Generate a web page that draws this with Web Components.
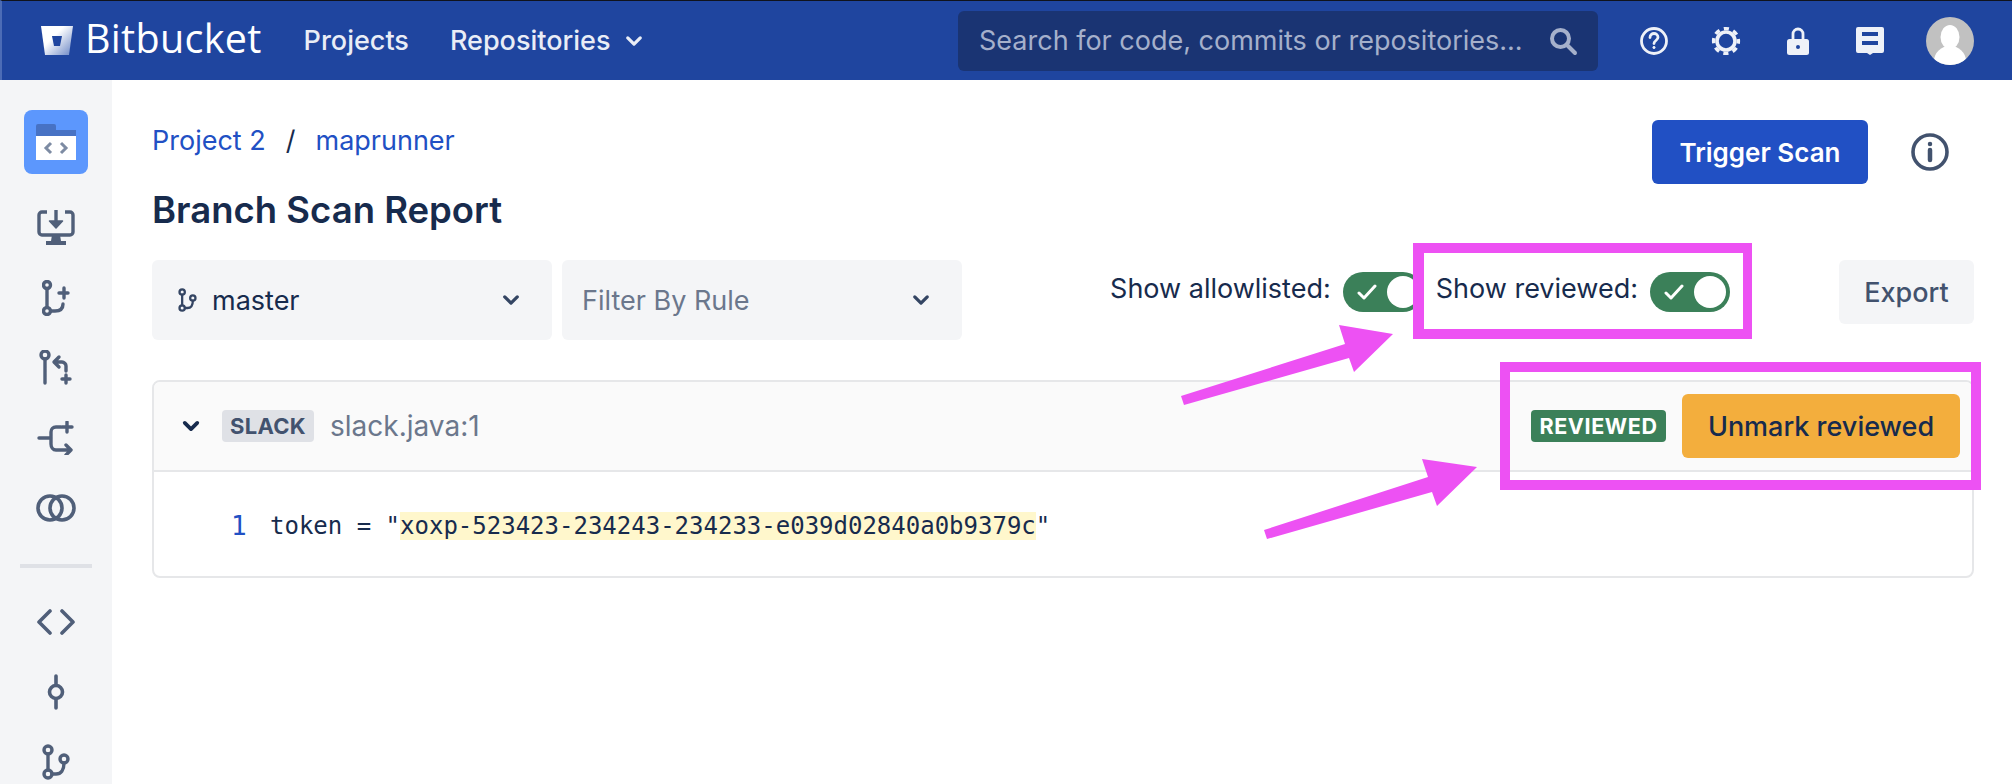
<!DOCTYPE html>
<html lang="en">
<head>
<meta charset="utf-8">
<title>Branch Scan Report</title>
<style>
  html, body { margin: 0; height: 100%; }
  body { position: relative; overflow: hidden; background: #fff; font-family: Inter, "Liberation Sans", sans-serif; color: #172b4d; }
</style>
</head>
<body>
<bb-app></bb-app>
<scan-annotations></scan-annotations>

<script>
const chevron = (size, color, width) => `<svg width="${size}" height="${size}" viewBox="0 0 16 16" fill="none" stroke="${color}" stroke-width="${width}" stroke-linecap="round" stroke-linejoin="round"><path d="M3 5.5l5 5 5-5"/></svg>`;

const branchIcon = (w, h, color) => `<svg width="${w}" height="${h}" viewBox="0 0 28 36" fill="none" stroke="${color}" stroke-width="3.4" stroke-linecap="round"><circle cx="6" cy="6" r="4"/><circle cx="6" cy="30" r="4"/><circle cx="22" cy="15" r="4"/><path d="M6 10v16M10 30h4c5 0 8-4 8-11"/></svg>`;

class BbHeader extends HTMLElement {
  constructor() {
    super();
    this.attachShadow({ mode: 'open' });
  }
  connectedCallback() {
    this.shadowRoot.innerHTML = `
      <style>
        :host { display: flex; align-items: center; box-sizing: border-box; height: 80px; padding: 0 38px 0 39px; background: #1f459f; border-top: 1px solid #10131c; border-left: 2px solid #4c6cb6; color: #fff; }
        .logo { display: flex; align-items: center; gap: 12px; }
        .word { font: 400 39.5px "Open Sans", sans-serif; letter-spacing: 0.3px; line-height: 1; position: relative; top: -2px; }
        nav { display: flex; align-items: center; gap: 41px; margin-left: 42px; flex: 1; font-size: 27px; font-weight: 500; color: #e9edf6; }
        .repos { display: flex; align-items: center; gap: 14px; }
        svg { display: block; }
        .search { display: flex; align-items: center; justify-content: space-between; box-sizing: border-box; width: 640px; height: 60px; padding: 0 20px 0 21px; background: #1a3473; border-radius: 6px; color: #a5b0cb; font-size: 27px; white-space: nowrap; }
        .icons { display: flex; align-items: center; gap: 32px; margin-left: 36px; }
        .icons svg { width: 40px; height: 40px; }
        .icons .avatar { margin-left: 4px; width: 48px; height: 48px; }
      </style>
      <div class="logo">
        <svg width="32" height="30" viewBox="0 0 32 30">
          <defs><linearGradient id="bk" x1="0.45" y1="0.3" x2="1" y2="0.8"><stop offset="0" stop-color="#fff"/><stop offset="1" stop-color="#7f97cd"/></linearGradient></defs>
          <path d="M0 0H32L28 29H4Z" fill="url(#bk)"/><path d="M11 10H21L19 20H13Z" fill="#1f459f"/>
        </svg>
        <span class="word">Bitbucket</span>
      </div>
      <nav>
        <span>Projects</span>
        <span class="repos">Repositories ${chevron(20, '#e9edf6', 2.6)}</span>
      </nav>
      <div class="search">
        <span>Search for code, commits or repositories...</span>
        <svg width="30" height="30" viewBox="0 0 30 30" fill="none" stroke="#a5b0cb" stroke-width="4" stroke-linecap="round"><circle cx="12.5" cy="12.5" r="8.5"/><path d="M19 19l8 8"/></svg>
      </div>
      <div class="icons">
        <svg viewBox="0 0 40 40" fill="none" stroke="#eef1f8" stroke-width="2.8"><circle cx="20" cy="20" r="12.5"/><path d="M16 16.5c0-2.5 2-4 4-4s4 1.5 4 3.8c0 3.2-4 3.2-4 6.2" stroke-linecap="round"/><circle cx="20" cy="26.5" r="1.1" fill="#eef1f8" stroke-width="1"/></svg>
        <svg viewBox="0 0 40 40" fill="none" stroke="#eef1f8"><circle cx="20" cy="20" r="9" stroke-width="3.6"/><circle cx="20" cy="20" r="12.4" stroke-width="3.4" stroke-dasharray="5.2 4.54" stroke-dashoffset="2.6"/></svg>
        <svg viewBox="0 0 40 40" fill="none"><path d="M15 19v-6a5 5 0 0110 0v6" stroke="#eef1f8" stroke-width="2.8"/><rect x="9" y="18" width="22" height="16" rx="2.500" fill="#eef1f8"/><circle cx="20" cy="26" r="2" fill="#1f459f"/></svg>
        <svg viewBox="0 0 40 40" fill="none"><path d="M6 8a2 2 0 012-2h24a2 2 0 012 2v22a2 2 0 01-2 2h-9l-3 2-3-2H8a2 2 0 01-2-2z" fill="#eef1f8"/><rect x="12" y="11" width="16" height="4" fill="#1f459f"/><rect x="12" y="20" width="16" height="4" fill="#1f459f"/></svg>
        <svg class="avatar" viewBox="0 0 48 48"><defs><clipPath id="av"><circle cx="24" cy="24" r="24"/></clipPath></defs><circle cx="24" cy="24" r="24" fill="#c1c1c1"/><g clip-path="url(#av)" fill="#fff"><ellipse cx="24" cy="20" rx="9.500" ry="12"/><ellipse cx="24" cy="44" rx="16" ry="15"/></g></svg>
      </div>
    `;
  }
}

class SideIcon extends HTMLElement {
  constructor() {
    super();
    this.attachShadow({ mode: 'open' });
  }
  connectedCallback() {
    this.shadowRoot.innerHTML = `
      <style>
        :host { display: flex; align-items: center; justify-content: center; width: 64px; height: 70px; }
        :host([active]) { height: 64px; background: #5c97fd; border-radius: 8px; }
      </style>
      <slot></slot>
    `;
  }
}

class BbSidebar extends HTMLElement {
  constructor() {
    super();
    this.attachShadow({ mode: 'open' });
  }
  connectedCallback() {
    const c = '#505f79';
    this.shadowRoot.innerHTML = `
      <style>
        :host { display: flex; flex-direction: column; align-items: center; box-sizing: border-box; flex: none; width: 112px; padding-top: 30px; background: #f4f5f7; overflow: hidden; }
        side-icon { flex: none; }
        svg { display: block; }
        .tile { margin-bottom: 19px; }
        hr { flex: none; width: 72px; height: 4px; margin: 21px 0 19px; border: 0; background: #dfe1e6; }
      </style>
      <side-icon active class="tile">
        <svg width="40" height="36" viewBox="0 0 40 36"><path d="M0 2a2 2 0 012-2h16a2 2 0 012 2v4h20v7H0z" fill="#4772c4"/><rect y="12" width="40" height="24" fill="#fff"/><path d="M15 19l-5 5 5 5M25 19l5 5-5 5" fill="none" stroke="#7d8ba3" stroke-width="3"/></svg>
      </side-icon>
      <side-icon>
        <svg width="38" height="38" viewBox="0 0 38 38" fill="none"><path d="M10 3H5a3 3 0 00-3 3v17a3 3 0 003 3h28a3 3 0 003-3V6a3 3 0 00-3-3h-5" stroke="${c}" stroke-width="3.4"/><path d="M19 1v14" stroke="${c}" stroke-width="3.4"/><path d="M12.500 12h13L19 19z" fill="${c}" stroke="${c}" stroke-width="1.500" stroke-linejoin="round"/><path d="M15 26h8l1 6h5v4H9v-4h5z" fill="${c}"/></svg>
      </side-icon>
      <side-icon>
        <svg width="28" height="36" viewBox="0 0 28 36" fill="none" stroke="${c}" stroke-width="3.400" stroke-linecap="round"><circle cx="5" cy="5" r="3.500"/><circle cx="5" cy="31" r="3.500"/><path d="M5 9v18M9 31h4c6 0 8-3 8-7M22 8v10M17 13h9"/></svg>
      </side-icon>
      <side-icon>
        <svg width="34" height="36" viewBox="0 0 34 36" fill="none" stroke="${c}" stroke-width="3.400" stroke-linecap="round" stroke-linejoin="round"><circle cx="6" cy="5" r="4"/><path d="M6 9v24M20 7l-5 5 5 5M16 12h7c2 0 4 2 4 4v5M27 25v8M23 29h8"/></svg>
      </side-icon>
      <side-icon>
        <svg width="38" height="34" viewBox="0 0 38 34" fill="none" stroke="${c}" stroke-width="3.400" stroke-linecap="round" stroke-linejoin="round"><path d="M2 17h12M24 6h-5c-3 0-5 2-5 5v12c0 3 2 6 5 6h15M29 24l5 5-5 5M30 1v10M25 6h10"/></svg>
      </side-icon>
      <side-icon>
        <svg width="40" height="30" viewBox="0 0 40 30" fill="none" stroke="${c}" stroke-width="3.600"><circle cx="14" cy="15" r="12"/><circle cx="26" cy="15" r="12"/></svg>
      </side-icon>
      <hr>
      <side-icon>
        <svg width="38" height="26" viewBox="0 0 38 26" fill="none" stroke="${c}" stroke-width="3.600" stroke-linecap="round" stroke-linejoin="round"><path d="M13 2L2 13l11 11M25 2l11 11-11 11"/></svg>
      </side-icon>
      <side-icon>
        <svg width="18" height="36" viewBox="0 0 18 36" fill="none" stroke="${c}" stroke-width="3.600" stroke-linecap="round"><circle cx="9" cy="18" r="6.500"/><path d="M9 2v9M9 25v9"/></svg>
      </side-icon>
      <side-icon>${branchIcon(28, 36, c)}</side-icon>
    `;
  }
}

class ScanTitle extends HTMLElement {
  constructor() {
    super();
    this.attachShadow({ mode: 'open' });
  }
  connectedCallback() {
    this.shadowRoot.innerHTML = `
      <style>
        :host { display: flex; justify-content: space-between; height: 140px; }
        .crumbs { display: flex; align-items: center; height: 40px; font-size: 27px; color: #2150c4; }
        .sep { margin: 0 20px; color: #172b4d; }
        h1 { margin: 28px 0 0; font-size: 36.5px; line-height: 44px; font-weight: 600; color: #172b4d; }
        .actions { display: flex; align-items: flex-start; gap: 43px; }
        button { width: 216px; height: 64px; border: 0; border-radius: 6px; background: #2150c4; color: #fff; font: 600 26px Inter, sans-serif; }
        svg { display: block; margin: 13px 25px 0 0; }
      </style>
      <div>
        <div class="crumbs"><span>Project 2</span><span class="sep">/</span><span>maprunner</span></div>
        <h1>Branch Scan Report</h1>
      </div>
      <div class="actions">
        <button>Trigger Scan</button>
        <svg width="38" height="38" viewBox="0 0 38 38" fill="none" stroke="#42526e" stroke-width="3.600"><circle cx="19" cy="19" r="17"/><path d="M19 17v10" stroke-width="4.500" stroke-linecap="round"/><circle cx="19" cy="11" r="1.500" fill="#42526e" stroke-width="1.500"/></svg>
      </div>
    `;
  }
}

class ScanSelect extends HTMLElement {
  constructor() {
    super();
    this.attachShadow({ mode: 'open' });
  }
  connectedCallback() {
    this.shadowRoot.innerHTML = `
      <style>
        :host { display: flex; align-items: center; box-sizing: border-box; width: 400px; height: 80px; padding: 0 31px 0 26px; background: #f4f5f7; border-radius: 6px; font-size: 27px; color: #172b4d; }
        :host([placeholder]) { padding-left: 20px; color: #6b778c; }
        .value { flex: 1; }
        slot[name=icon]::slotted(*) { margin-right: 15px; }
        svg { display: block; }
      </style>
      <slot name="icon"></slot>
      <span class="value"><slot></slot></span>
      ${chevron(20, '#344563', 2.6)}
    `;
  }
}

class ScanToggle extends HTMLElement {
  constructor() {
    super();
    this.attachShadow({ mode: 'open' });
  }
  connectedCallback() {
    this.shadowRoot.innerHTML = `
      <style>
        :host { display: flex; align-items: center; gap: 12px; font-size: 27px; color: #172b4d; }
        .label { position: relative; top: -4px; }
        .track { display: flex; align-items: center; justify-content: space-between; box-sizing: border-box; width: 80px; height: 40px; padding: 0 4px 0 14px; border-radius: 20px; background: #3b8059; }
        .knob { width: 32px; height: 32px; border-radius: 50%; background: #fff; }
        svg { display: block; }
      </style>
      <span class="label"><slot></slot></span>
      <span class="track">
        <svg width="20" height="18" viewBox="0 0 20 18" fill="none" stroke="#fff" stroke-width="3" stroke-linecap="round" stroke-linejoin="round"><path d="M2 10l5 5L18 3"/></svg>
        <span class="knob"></span>
      </span>
    `;
  }
}

class ScanToolbar extends HTMLElement {
  constructor() {
    super();
    this.attachShadow({ mode: 'open' });
  }
  connectedCallback() {
    this.shadowRoot.innerHTML = `
      <style>
        :host { display: flex; align-items: flex-start; gap: 10px; height: 80px; }
        .toggles { display: flex; gap: 13px; margin: 12px 0 0 auto; }
        button { margin-left: 99px; width: 135px; height: 64px; border: 0; border-radius: 6px; background: #f4f5f7; color: #42526e; font: 500 27px Inter, sans-serif; }
        svg { display: block; }
      </style>
      <scan-select>
        <span slot="icon">${branchIcon(19, 24, '#344563')}</span>
        master
      </scan-select>
      <scan-select placeholder>Filter By Rule</scan-select>
      <div class="toggles">
        <scan-toggle>Show allowlisted:</scan-toggle>
        <scan-toggle>Show reviewed:</scan-toggle>
      </div>
      <button>Export</button>
    `;
  }
}

class ScanFinding extends HTMLElement {
  constructor() {
    super();
    this.attachShadow({ mode: 'open' });
  }
  connectedCallback() {
    this.shadowRoot.innerHTML = `
      <style>
        :host { display: block; box-sizing: border-box; height: 198px; margin-top: 40px; border: 2px solid #e6e7e9; border-radius: 8px; overflow: hidden; }
        header { display: flex; align-items: center; box-sizing: border-box; height: 90px; padding: 0 12px 0 27px; background: #fafafa; border-bottom: 2px solid #e6e7e9; }
        .lozenge { margin-left: 21px; height: 32px; line-height: 32px; border-radius: 4px; background: #dfe1e6; color: #42526e; font-size: 22px; font-weight: 700; box-sizing: border-box; width: 92px; text-align: center; letter-spacing: 0.3px; }
        .file { margin-left: 16px; flex: 1; font-size: 28px; color: #6b778c; }
        .state { height: 32px; width: 135px; line-height: 32px; text-align: center; border-radius: 4px; background: #3b8059; color: #fff; font-size: 21.5px; font-weight: 700; letter-spacing: 0.6px; }
        button { margin-left: 16px; width: 278px; height: 64px; border: 0; border-radius: 6px; background: #f3ae3d; color: #172b4d; font: 500 27px Inter, sans-serif; }
        svg { display: block; }
        .code { display: flex; align-items: center; padding: 40px 0 0 77px; font: 24px/28px "DejaVu Sans Mono", "Liberation Mono", monospace; color: #172b4d; }
        .num { width: 39px; color: #2150c4; font-size: 26px; }
        mark { background: #fff7cc; color: inherit; }
      </style>
      <header>
        ${chevron(20, '#172b4d', 3)}
        <span class="lozenge">SLACK</span>
        <span class="file">slack.java:1</span>
        <span class="state">REVIEWED</span>
        <button>Unmark reviewed</button>
      </header>
      <div class="code"><span class="num">1</span><span>token = "<mark>xoxp-523423-234243-234233-e039d02840a0b9379c</mark>"</span></div>
    `;
  }
}

class BbApp extends HTMLElement {
  constructor() {
    super();
    this.attachShadow({ mode: 'open' });
  }
  connectedCallback() {
    this.shadowRoot.innerHTML = `
      <style>
        :host { display: flex; flex-direction: column; height: 784px; overflow: hidden; }
        .body { display: flex; flex: 1; min-height: 0; }
        main { flex: 1; box-sizing: border-box; padding: 40px 38px 0 40px; }
      </style>
      <bb-header></bb-header>
      <div class="body">
        <bb-sidebar></bb-sidebar>
        <main>
          <scan-title></scan-title>
          <scan-toolbar></scan-toolbar>
          <scan-finding></scan-finding>
        </main>
      </div>
    `;
  }
}

// pink callouts drawn on top of the screenshot
class ScanAnnotations extends HTMLElement {
  constructor() {
    super();
    this.attachShadow({ mode: 'open' });
  }
  connectedCallback() {
    this.shadowRoot.innerHTML = `
      <style>
        :host { position: absolute; inset: 0; pointer-events: none; }
        svg { display: block; }
      </style>
      <svg width="2012" height="784" fill="#ed51f3">
        <path fill-rule="evenodd" d="M1413 243H1752V339H1413ZM1424 253V329H1743V253Z"/>
        <path fill-rule="evenodd" d="M1500 362H1981V490H1500ZM1510 372V480H1971V372Z"/>
        <path d="M1181 396L1345 344L1339 325L1393 334L1354 372L1349 358L1184 405Z"/>
        <path d="M1264 530L1428 477L1422 459L1477 467L1437 506L1432 492L1267 539Z"/>
      </svg>
    `;
  }
}

customElements.define('bb-header', BbHeader);
customElements.define('side-icon', SideIcon);
customElements.define('bb-sidebar', BbSidebar);
customElements.define('scan-title', ScanTitle);
customElements.define('scan-select', ScanSelect);
customElements.define('scan-toggle', ScanToggle);
customElements.define('scan-toolbar', ScanToolbar);
customElements.define('scan-finding', ScanFinding);
customElements.define('bb-app', BbApp);
customElements.define('scan-annotations', ScanAnnotations);
</script>
</body>
</html>
